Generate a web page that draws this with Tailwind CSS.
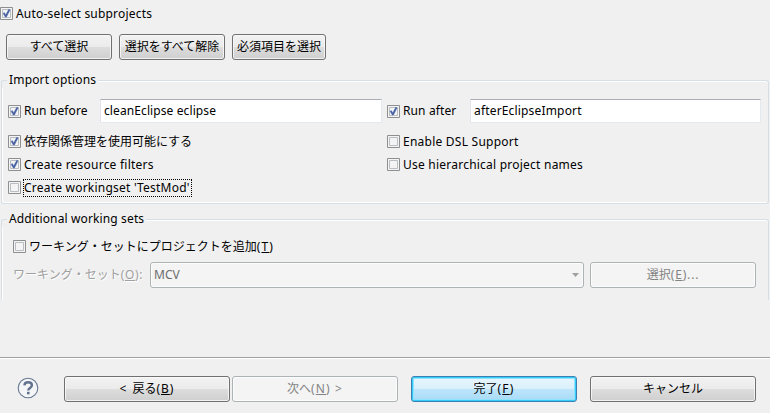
<!DOCTYPE html>
<html lang="ja">
<head>
<meta charset="utf-8">
<title>Import</title>
<script src="https://cdn.jsdelivr.net/npm/@tailwindcss/browser@4"></script>
</head>
<body class="w-[770px] h-[413px] overflow-hidden bg-[#f0f0f0] font-['Noto_Sans','Noto_Sans_CJK_JP',sans-serif] text-[12px] leading-4 text-black whitespace-nowrap">
<svg width="0" height="0" class="hidden">
  <defs>
    <linearGradient id="box" x1="0" y1="0" x2="1" y2="1"><stop offset="0" stop-color="#c9ccd1"/><stop offset="1" stop-color="#f8f8f8"/></linearGradient>
  </defs>
  <symbol id="off" viewBox="0 0 13 13"><path d="M.5.5h12v12H.5z" fill="#f4f4f4" stroke="#8e8f8f"/><path d="M2.5 2.5h8v8h-8z" fill="url(#box)" stroke="#b9bec5"/></symbol>
  <symbol id="on" viewBox="0 0 13 13"><use href="#off"/><path d="M3 6.3 4.4 5.5 5.7 7.7 8.7 2.3 10.2 2.8 6.5 10.1 5.2 10.1Z" fill="#4660a4" stroke="#4660a4" stroke-width=".3"/></symbol>
</svg>
<main class="flex flex-col h-[413px]">
  <div class="h-[34px] pt-[7px] flex items-start"><svg class="size-[13px]"><use href="#on"/></svg><span class="ml-[3px] -mt-px tracking-[0.19px]">Auto-select subprojects</span></div>
  <div class="h-[38px] pl-[6px] flex gap-[7px]">
    <button class="w-[106px] h-[26px] pb-px rounded-[3px] border border-[#707070] bg-[linear-gradient(#f2f2f2,#ebebeb_48%,#dddddd_50%,#cfcfcf)] shadow-[inset_0_0_0_1px_#fafafacc]">すべて選択</button>
    <button class="w-[106px] h-[26px] pb-px rounded-[3px] border border-[#707070] bg-[linear-gradient(#f2f2f2,#ebebeb_48%,#dddddd_50%,#cfcfcf)] shadow-[inset_0_0_0_1px_#fafafacc]">選択をすべて解除</button>
    <button class="w-[94px] h-[26px] pb-px rounded-[3px] border border-[#707070] bg-[linear-gradient(#f2f2f2,#ebebeb_48%,#dddddd_50%,#cfcfcf)] shadow-[inset_0_0_0_1px_#fafafacc]">必須項目を選択</button>
  </div>
  <section class="h-[132px] mx-px flex flex-col">
    <div class="h-4 flex"><i class="w-[6px] h-2 mt-2 border-t border-l border-[#d5dfe5] rounded-tl-[3px]"></i><h2 class="px-[2px] tracking-[0.17px]">Import options</h2><i class="flex-1 h-2 mt-2 border-t border-r border-[#d5dfe5] rounded-tr-[3px] shadow-[inset_0_1px_0_#fff]"></i></div>
    <div class="flex-1 border-x border-b border-[#d5dfe5] rounded-b-[3px] shadow-[inset_1px_-1px_0_#fff] pl-[6px] pt-[11px]">
      <div class="h-[24px] flex items-center">
        <svg class="size-[13px]"><use href="#on"/></svg><span class="w-[76px] ml-[3px] tracking-[0.12px]">Run before</span>
        <div class="w-[282px] h-[24px] bg-white border border-[#e2e9ef] border-t-[#abadb3] border-l-[#e2e3ea] rounded-[1px] pl-[3px] pt-[3px] tracking-[0.1px]">cleanEclipse eclipse</div>
        <svg class="size-[13px] ml-[5px]"><use href="#on"/></svg><span class="w-[67px] ml-[3px] tracking-[0.12px]">Run after</span>
        <div class="w-[291px] h-[24px] bg-white border border-[#e2e9ef] border-t-[#abadb3] border-l-[#e2e3ea] rounded-[1px] pl-[3px] pt-[3px] tracking-[0.17px]">afterEclipseImport</div>
      </div>
      <div class="mt-[7px] h-[23px] flex items-center"><div class="w-[379px] flex items-center"><svg class="size-[13px]"><use href="#on"/></svg><span class="ml-[3px]">依存関係管理を使用可能にする</span></div><svg class="size-[13px]"><use href="#off"/></svg><span class="ml-[3px] tracking-[0.24px]">Enable DSL Support</span></div>
      <div class="h-[23px] flex items-center"><div class="w-[379px] flex items-center"><svg class="size-[13px]"><use href="#on"/></svg><span class="ml-[3px] tracking-[0.23px]">Create resource filters</span></div><svg class="size-[13px]"><use href="#off"/></svg><span class="ml-[3px] tracking-[0.23px]">Use hierarchical project names</span></div>
      <div class="h-[23px] flex items-center"><svg class="size-[13px]"><use href="#off"/></svg><span class="ml-[2px] w-[169px] h-[18px] border border-dotted border-black tracking-[0.22px]">Create workingset 'TestMod'</span></div>
    </div>
  </section>
  <section class="mt-[7px] h-[89px] mx-px flex flex-col">
    <div class="h-4 flex"><i class="w-[6px] h-2 mt-2 border-t border-l border-[#d5dfe5] rounded-tl-[3px]"></i><h2 class="px-[2px] tracking-[0.13px]">Additional working sets</h2><i class="flex-1 h-2 mt-2 border-t border-r border-[#d5dfe5] rounded-tr-[3px] shadow-[inset_0_1px_0_#fff]"></i></div>
    <div class="flex-1 border-x border-[#d5dfe5] shadow-[inset_1px_0_0_#fff] pl-[11px] pt-[11px]">
      <div class="h-[16px] flex items-center"><svg class="size-[13px]"><use href="#off"/></svg><span class="ml-[3px] pt-px">ワーキング・セットにプロジェクトを追加<span class="tracking-[1.2px]">(<u>T</u>)</span></span></div>
      <div class="mt-[8px] h-[26px] flex items-center"><span class="w-[137px] text-[#a0a0a0] [text-shadow:1px_1px_0_#fff]">ワーキング・セット<span class="tracking-[0.7px]">(<u>O</u>):</span></span>
        <div class="w-[434px] h-[26px] flex items-center justify-between bg-[#f4f4f4] border border-[#adb2b5] rounded-[3px] pl-[3px] pr-[4px] text-[#6d6d6d] shadow-[inset_0_0_0_1px_#fcfcfc]"><span>MCV</span><svg class="w-[7px] h-[4px]" viewBox="0 0 7 4"><path d="M0 0h7L3.5 4z" fill="#a0a0a0"/></svg></div>
        <button class="ml-[6px] w-[166px] h-[26px] pb-px rounded-[3px] border border-[#adb2b5] bg-[#f4f4f4] text-[#838383] shadow-[inset_0_0_0_1px_#fcfcfc]">選択<span class="tracking-[0.8px]">(<u>E</u>)...</span></button>
      </div>
    </div>
  </section>
  <footer class="mt-[57px] h-[56px] border-t border-[#a0a0a0] shadow-[inset_0_1px_0_#fff] pt-[18px] pl-[17px] flex items-start">
    <svg class="w-[22px] h-[24px]" viewBox="0 0 22 24"><circle cx="11" cy="12" r="9.8" fill="#f4f5f7" stroke="#667891" stroke-width="1.1"/><path d="M7.4 9.4C7.5 7 9 6.2 11.1 6.2c2.4 0 3.8 1.2 3.8 3 0 2.9-3.6 2.6-3.6 5.2" fill="none" stroke="#61738f" stroke-width="2.4"/><path d="M10 15.8h2.6v2.5H10z" fill="#61738f"/></svg>
    <button class="ml-[25px] w-[166px] h-[26px] pb-px rounded-[3px] border border-[#707070] bg-[linear-gradient(#f2f2f2,#ebebeb_48%,#dddddd_50%,#cfcfcf)] shadow-[inset_0_0_0_1px_#fafafacc]"><span class="tracking-[1.4px]">&lt; </span>戻る<span class="tracking-[1px]">(<u>B</u>)</span></button>
    <button class="ml-[2px] w-[166px] h-[26px] pb-px rounded-[3px] border border-[#adb2b5] bg-[#f4f4f4] text-[#838383] shadow-[inset_0_0_0_1px_#fcfcfc]">次へ<span class="tracking-[1.1px]">(<u>N</u>) &gt;</span></button>
    <button class="ml-[13px] w-[166px] h-[26px] pb-px rounded-[3px] border border-[#3c7fb1] bg-[linear-gradient(#eaf6fd,#d9f0fc_48%,#bee6fd_50%,#a7d9f5)] shadow-[inset_0_0_0_1px_#33ccfb,inset_0_0_0_2px_#8fe3fc]">完了<span class="tracking-[1.2px]">(<u>F</u>)</span></button>
    <button class="ml-[13px] w-[166px] h-[26px] pb-px rounded-[3px] border border-[#707070] bg-[linear-gradient(#f2f2f2,#ebebeb_48%,#dddddd_50%,#cfcfcf)] shadow-[inset_0_0_0_1px_#fafafacc]">キャンセル</button>
  </footer>
</main>
</body>
</html>
